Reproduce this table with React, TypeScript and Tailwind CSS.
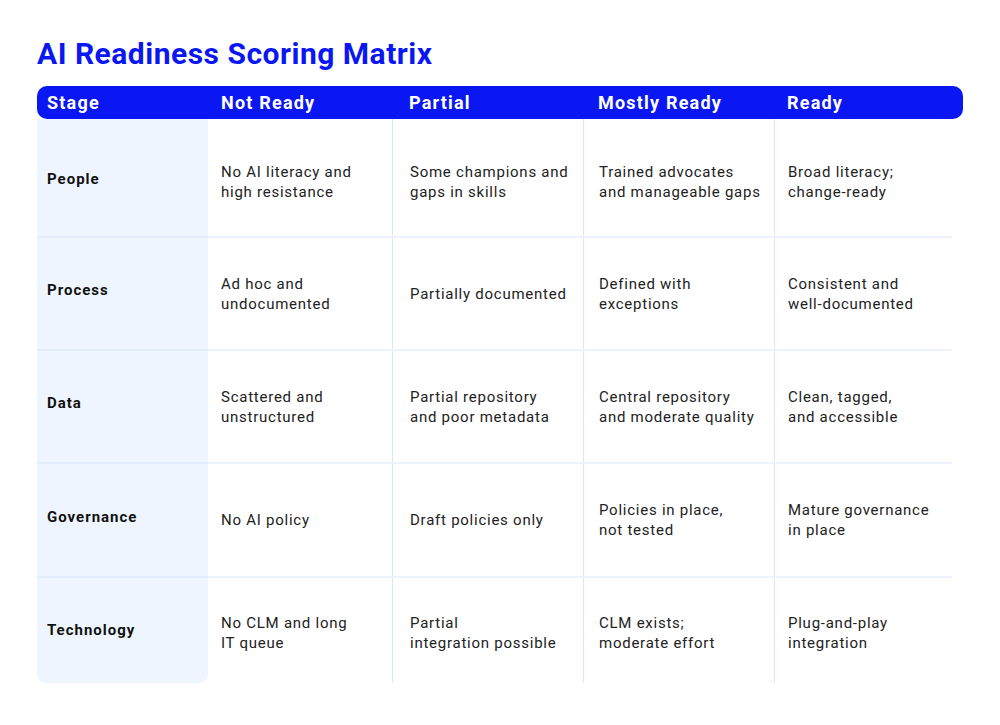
const columns = ["Stage", "Not Ready", "Partial", "Mostly Ready", "Ready"];

const rows: { stage: string; cells: string[][]; h: string; lab: string; body: string }[] = [
  {
    stage: "People",
    h: "h-[117px]",
    lab: "pt-[4px]",
    body: "pt-[8px]",
    cells: [
      ["No AI literacy and", "high resistance"],
      ["Some champions and", "gaps in skills"],
      ["Trained advocates", "and manageable gaps"],
      ["Broad literacy;", "change-ready"],
    ],
  },
  {
    stage: "Process",
    h: "h-[113px]",
    lab: "pb-[6px]",
    body: "pt-0",
    cells: [
      ["Ad hoc and", "undocumented"],
      ["Partially documented"],
      ["Defined with", "exceptions"],
      ["Consistent and", "well-documented"],
    ],
  },
  {
    stage: "Data",
    h: "h-[113px]",
    lab: "pb-[6px]",
    body: "pt-0",
    cells: [
      ["Scattered and", "unstructured"],
      ["Partial repository", "and poor metadata"],
      ["Central repository", "and moderate quality"],
      ["Clean, tagged,", "and accessible"],
    ],
  },
  {
    stage: "Governance",
    h: "h-[114px]",
    lab: "pb-[6px]",
    body: "pt-0",
    cells: [
      ["No AI policy"],
      ["Draft policies only"],
      ["Policies in place,", "not tested"],
      ["Mature governance", "in place"],
    ],
  },
  {
    stage: "Technology",
    h: "h-[107px]",
    lab: "pt-0",
    body: "pt-[4px]",
    cells: [
      ["No CLM and long", "IT queue"],
      ["Partial", "integration possible"],
      ["CLM exists;", "moderate effort"],
      ["Plug-and-play", "integration"],
    ],
  },
];

const colW = ["w-[184px]", "w-[191px]", "w-[191px]", "w-[178px]"];
const colPad = ["pl-[13px]", "pl-[17px]", "pl-[15px]", "pl-[13px]"];
const headPad = ["pl-[10px] w-[171px]", "pl-[13px] w-[184px]", "pl-[17px] w-[191px]", "pl-[15px] w-[191px]", "pl-[13px]"];

export default function App() {
  return (
    <div className="w-[1000px] h-[725px] bg-white pl-[37px] pt-[37px] font-['Roboto',sans-serif]">
      <h1 className="text-[30px] leading-[34px] font-bold text-[#0a17f2] tracking-[0.5px]">
        AI Readiness Scoring Matrix
      </h1>
      <div className="mt-[15px] w-[926px] h-[33px] rounded-[10px] bg-[#0a17f2] flex items-center text-white text-[18px] font-bold tracking-[1.2px]">
        {columns.map((c, i) => (
          <div key={c} className={headPad[i]}>
            {c}
          </div>
        ))}
      </div>
      <div className="flex w-[915px]">
        <div className="w-[171px] bg-[#eef5fe] rounded-b-[9px] flex flex-col">
          {rows.map((r, i) => (
            <div
              key={r.stage}
              className={`${r.h} ${r.lab} flex items-center pl-[10px] text-[15px] font-bold tracking-[1px] text-[#111] ${
                i > 0 ? "border-t-2 border-[#e3ecfb]" : ""
              }`}
            >
              {r.stage}
            </div>
          ))}
        </div>
        <div className="flex-1 flex flex-col">
          {rows.map((r, i) => (
            <div
              key={r.stage}
              className={`${r.h} flex ${i > 0 ? "border-t-2 border-[#edf2fd]" : ""}`}
            >
              {r.cells.map((lines, j) => (
                <div
                  key={j}
                  className={`${colW[j]} ${colPad[j]} ${r.body} flex flex-col justify-center text-[15px] leading-[20px] tracking-[0.75px] text-[#222] ${
                    j > 0 ? "border-l border-[#dbe6fa]" : ""
                  }`}
                >
                  {lines.map((l) => (
                    <span key={l}>{l}</span>
                  ))}
                </div>
              ))}
            </div>
          ))}
        </div>
      </div>
    </div>
  );
}
